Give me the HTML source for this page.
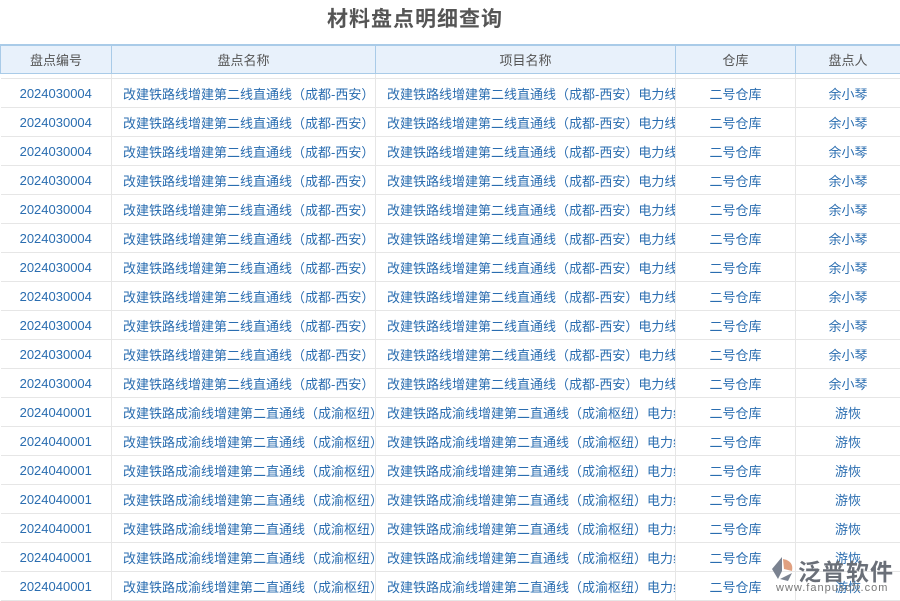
<!DOCTYPE html>
<html><head><meta charset="utf-8"><style>
body{margin:0;width:900px;height:600px;overflow:hidden;background:#fff;font-family:"Liberation Sans","Noto Sans CJK SC",sans-serif;position:relative}
.title{position:absolute;top:5px;left:0;width:830px;text-align:center;font-size:21px;font-weight:bold;color:#555;letter-spacing:1px;line-height:30px}
table{position:absolute;top:44px;left:0;border-collapse:collapse;table-layout:fixed;width:900px}
th{height:27px;background:#e8f1fb;border:1px solid #a9cbe8;border-top:2px solid #a9cbe8;font-weight:normal;font-size:13px;color:#555;padding:0}
td{height:28px;border-bottom:1px solid #e6e6e6;border-right:1px solid #e6e6e6;font-size:13px;color:#2a6db0;text-align:center;padding:0;white-space:nowrap;overflow:hidden}
td.l{text-align:left;padding-left:11px}
tr.gap td{height:4px;border-bottom:1px solid #e6e6e6}
.logo{position:absolute;left:798px;top:553px;font-size:23px;color:#6a6f78;font-weight:bold;white-space:nowrap;letter-spacing:1px}
.url{position:absolute;left:776px;top:582px;font-size:11px;color:#777;letter-spacing:1px;white-space:nowrap}
</style></head><body>
<div class="title">材料盘点明细查询</div>
<table>
<colgroup><col style="width:111px"><col style="width:264px"><col style="width:300px"><col style="width:120px"><col style="width:105px"></colgroup>
<tr><th>盘点编号</th><th>盘点名称</th><th>项目名称</th><th>仓库</th><th>盘点人</th></tr>
<tr class="gap"><td></td><td></td><td></td><td></td><td></td></tr>
<tr><td>2024030004</td><td class="l">改建铁路线增建第二线直通线（成都-西安）</td><td class="l">改建铁路线增建第二线直通线（成都-西安）电力线</td><td>二号仓库</td><td>余小琴</td></tr>
<tr><td>2024030004</td><td class="l">改建铁路线增建第二线直通线（成都-西安）</td><td class="l">改建铁路线增建第二线直通线（成都-西安）电力线</td><td>二号仓库</td><td>余小琴</td></tr>
<tr><td>2024030004</td><td class="l">改建铁路线增建第二线直通线（成都-西安）</td><td class="l">改建铁路线增建第二线直通线（成都-西安）电力线</td><td>二号仓库</td><td>余小琴</td></tr>
<tr><td>2024030004</td><td class="l">改建铁路线增建第二线直通线（成都-西安）</td><td class="l">改建铁路线增建第二线直通线（成都-西安）电力线</td><td>二号仓库</td><td>余小琴</td></tr>
<tr><td>2024030004</td><td class="l">改建铁路线增建第二线直通线（成都-西安）</td><td class="l">改建铁路线增建第二线直通线（成都-西安）电力线</td><td>二号仓库</td><td>余小琴</td></tr>
<tr><td>2024030004</td><td class="l">改建铁路线增建第二线直通线（成都-西安）</td><td class="l">改建铁路线增建第二线直通线（成都-西安）电力线</td><td>二号仓库</td><td>余小琴</td></tr>
<tr><td>2024030004</td><td class="l">改建铁路线增建第二线直通线（成都-西安）</td><td class="l">改建铁路线增建第二线直通线（成都-西安）电力线</td><td>二号仓库</td><td>余小琴</td></tr>
<tr><td>2024030004</td><td class="l">改建铁路线增建第二线直通线（成都-西安）</td><td class="l">改建铁路线增建第二线直通线（成都-西安）电力线</td><td>二号仓库</td><td>余小琴</td></tr>
<tr><td>2024030004</td><td class="l">改建铁路线增建第二线直通线（成都-西安）</td><td class="l">改建铁路线增建第二线直通线（成都-西安）电力线</td><td>二号仓库</td><td>余小琴</td></tr>
<tr><td>2024030004</td><td class="l">改建铁路线增建第二线直通线（成都-西安）</td><td class="l">改建铁路线增建第二线直通线（成都-西安）电力线</td><td>二号仓库</td><td>余小琴</td></tr>
<tr><td>2024030004</td><td class="l">改建铁路线增建第二线直通线（成都-西安）</td><td class="l">改建铁路线增建第二线直通线（成都-西安）电力线</td><td>二号仓库</td><td>余小琴</td></tr>
<tr><td>2024040001</td><td class="l">改建铁路成渝线增建第二直通线（成渝枢纽）</td><td class="l">改建铁路成渝线增建第二直通线（成渝枢纽）电力线</td><td>二号仓库</td><td>游恢</td></tr>
<tr><td>2024040001</td><td class="l">改建铁路成渝线增建第二直通线（成渝枢纽）</td><td class="l">改建铁路成渝线增建第二直通线（成渝枢纽）电力线</td><td>二号仓库</td><td>游恢</td></tr>
<tr><td>2024040001</td><td class="l">改建铁路成渝线增建第二直通线（成渝枢纽）</td><td class="l">改建铁路成渝线增建第二直通线（成渝枢纽）电力线</td><td>二号仓库</td><td>游恢</td></tr>
<tr><td>2024040001</td><td class="l">改建铁路成渝线增建第二直通线（成渝枢纽）</td><td class="l">改建铁路成渝线增建第二直通线（成渝枢纽）电力线</td><td>二号仓库</td><td>游恢</td></tr>
<tr><td>2024040001</td><td class="l">改建铁路成渝线增建第二直通线（成渝枢纽）</td><td class="l">改建铁路成渝线增建第二直通线（成渝枢纽）电力线</td><td>二号仓库</td><td>游恢</td></tr>
<tr><td>2024040001</td><td class="l">改建铁路成渝线增建第二直通线（成渝枢纽）</td><td class="l">改建铁路成渝线增建第二直通线（成渝枢纽）电力线</td><td>二号仓库</td><td>游恢</td></tr>
<tr><td>2024040001</td><td class="l">改建铁路成渝线增建第二直通线（成渝枢纽）</td><td class="l">改建铁路成渝线增建第二直通线（成渝枢纽）电力线</td><td>二号仓库</td><td>游恢</td></tr>
</table>
<svg style="position:absolute;left:768px;top:555px" width="28" height="28" viewBox="0 0 28 28"><path d="M14 2 L4 14 L10 24 L14 16 Z" fill="#7a8290"/><path d="M15 4 Q26 6 24 16 L16 14 Z" fill="#e0a080"/><path d="M12 24 L24 18 L20 26 Z" fill="#7a8290"/></svg>
<div class="logo">泛普软件</div>
<div class="url">www.fanpusoft.com</div>
</body></html>
